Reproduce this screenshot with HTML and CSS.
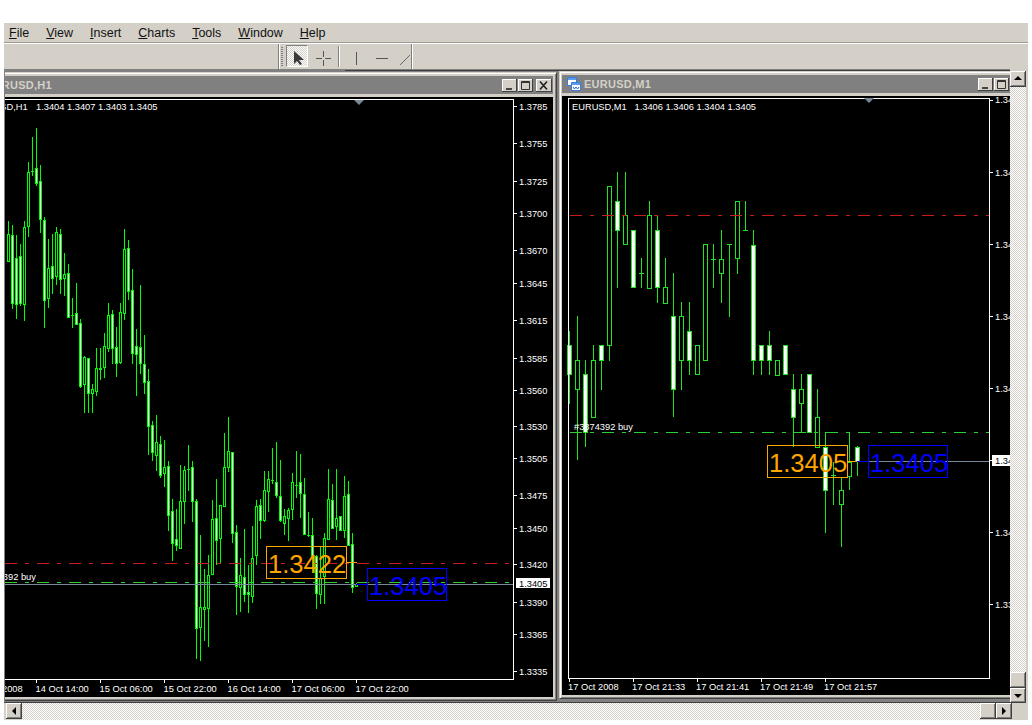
FILE: index.html
```html
<!DOCTYPE html>
<html lang="en">
<head>
<meta charset="utf-8">
<title>MetaTrader</title>
<link rel="stylesheet" href="styles.css">
</head>
<body>
<div class="app">
  <nav class="menubar">
    <span><u>F</u>ile</span><span><u>V</u>iew</span><span><u>I</u>nsert</span><span><u>C</u>harts</span><span><u>T</u>ools</span><span><u>W</u>indow</span><span><u>H</u>elp</span>
  </nav>
  <div class="toolbar">
    <div class="band">
      <div class="grip"></div>
      <div class="tool tool-active">
        <svg width="22" height="22" viewBox="0 0 22 22"><path class="ink" d="M8 6V19L11 16L14 20L16 19L13 15H18Z"/></svg>
      </div>
      <div class="tool tool-cross">
        <svg width="30" height="22" viewBox="0 0 30 22"><path class="line" d="M8 13.5H14M17 13.5H23M15.5 6V12M15.5 15V21"/></svg>
      </div>
      <div class="sep"></div>
      <div class="tool tool-v">
        <svg width="32" height="22" viewBox="0 0 32 22"><path class="line" d="M16.5 7V20"/></svg>
      </div>
      <div class="tool tool-h">
        <svg width="20" height="22" viewBox="0 0 20 22"><path class="line" d="M4 13.5H16"/></svg>
      </div>
      <div class="tool tool-d">
        <svg width="19" height="22" viewBox="0 0 19 22"><path class="line-soft" d="M8 20L18 10"/></svg>
      </div>
    </div>
  </div>
  <div class="workspace">
    <div class="mdi">
      <section class="window window-h1">
        <header class="title">
          <svg class="win-icon" width="14" height="14" viewBox="0 0 14 14"><path class="ico-a" d="M.5.5H9.5V8.5H.5Z"/><path class="ico-b" d="M4.5 5.5H13.5V13.5H4.5Z"/></svg>
          <span class="title-text">EURUSD,H1</span>
          <span class="win-btns">
            <span class="win-btn"><svg width="15" height="13" viewBox="0 0 15 13"><path class="glyph" d="M4 10H10"/></svg></span>
            <span class="win-btn"><svg width="15" height="13" viewBox="0 0 15 13"><path class="glyph-thin" d="M3.5 2.5H11.5V10.5H3.5ZM3.5 3.5H11.5"/></svg></span>
            <span class="win-btn win-close"><svg width="16" height="13" viewBox="0 0 16 13"><path class="glyph" d="M4 2.5L11 10.5M11 2.5L4 10.5"/></svg></span>
          </span>
        </header>
        <svg class="chart" width="589" height="600" viewBox="-36 97 589 600" data-chart="h1">
          <g class="candles"></g>
          <path class="frame" d="M-30.5 99.5H513.5V679.5H-30.5Z"/>
          <path class="frame" d="M514 106.5h3M514 143.5h3M514 181.5h3M514 213.5h3M514 250.5h3M514 283.5h3M514 320.5h3M514 358.5h3M514 390.5h3M514 426.5h3M514 458.5h3M514 495.5h3M514 528.5h3M514 564.5h3M514 602.5h3M514 634.5h3M514 671.5h3M36.5 680v3M100.5 680v3M164.5 680v3M228.5 680v3M292.5 680v3M356.5 680v3"/>
          <polygon class="marker" points="354,100 364,100 359,105"/>
          <path class="dash dash-red" d="M5 563.5H513"/>
          <path class="dash dash-green" d="M5 582.5H513"/>
          <path class="bid" d="M-36 584.5H513"/>
          <path class="seg-orange" d="M347 562.5H357"/>
          <path class="seg-blue" d="M356 584.5H367"/>
          <text class="axis" x="-26" y="110">EURUSD,H1<tspan x="36">1.3404 1.3407 1.3403 1.3405</tspan></text>
          <text class="axis" x="-23" y="580">#3874392 buy</text>
          <text class="axis" x="519" y="109.5">1.3785</text>
          <text class="axis" x="519" y="146.5">1.3755</text>
          <text class="axis" x="519" y="184.5">1.3725</text>
          <text class="axis" x="519" y="216.5">1.3700</text>
          <text class="axis" x="519" y="253.5">1.3670</text>
          <text class="axis" x="519" y="286.5">1.3645</text>
          <text class="axis" x="519" y="323.5">1.3615</text>
          <text class="axis" x="519" y="361.5">1.3585</text>
          <text class="axis" x="519" y="393.5">1.3560</text>
          <text class="axis" x="519" y="429.5">1.3530</text>
          <text class="axis" x="519" y="461.5">1.3505</text>
          <text class="axis" x="519" y="498.5">1.3475</text>
          <text class="axis" x="519" y="531.5">1.3450</text>
          <text class="axis" x="519" y="567.5">1.3420</text>
          <text class="axis" x="519" y="605.5">1.3390</text>
          <text class="axis" x="519" y="637.5">1.3365</text>
          <text class="axis" x="519" y="674.5">1.3335</text>
          <rect class="price-tag" x="516" y="578" width="34" height="10"/>
          <text class="axis axis-dark" x="519" y="586.5">1.3405</text>
          <text class="axis" x="-28" y="691.5">17 Oct 2008</text>
          <text class="axis" x="35.5" y="691.5">14 Oct 14:00</text>
          <text class="axis" x="99.5" y="691.5">15 Oct 06:00</text>
          <text class="axis" x="163.5" y="691.5">15 Oct 22:00</text>
          <text class="axis" x="227.5" y="691.5">16 Oct 14:00</text>
          <text class="axis" x="291.5" y="691.5">17 Oct 06:00</text>
          <text class="axis" x="355.5" y="691.5">17 Oct 22:00</text>
          <rect class="box-orange" x="266.5" y="546.5" width="80" height="32"/>
          <text class="big big-orange" x="268" y="573">1.3422</text>
          <rect class="box-blue" x="367.5" y="568.5" width="79" height="32"/>
          <text class="big big-blue" x="369" y="595">1.3405</text>
        </svg>
      </section>
      <section class="window window-m1">
        <header class="title">
          <svg class="win-icon" width="14" height="14" viewBox="0 0 14 14"><path class="ico-a" d="M.5.5H9.5V8.5H.5Z"/><path class="ico-bar" d="M1 1H9V3H1Z"/><path class="ico-b" d="M4.5 5.5H13.5V13.5H4.5Z"/><path class="ico-bar2" d="M5 6H13V8H5Z"/><path class="ico-w" d="M6 10L7.5 12L9 10L10.5 12L12 10"/></svg>
          <span class="title-text">EURUSD,M1</span>
          <span class="win-btns">
            <span class="win-btn"><svg width="15" height="13" viewBox="0 0 15 13"><path class="glyph" d="M4 10H10"/></svg></span>
            <span class="win-btn"><svg width="15" height="13" viewBox="0 0 15 13"><path class="glyph-thin" d="M3.5 2.5H11.5V10.5H3.5ZM3.5 3.5H11.5"/></svg></span>
            <span class="win-btn win-close"><svg width="16" height="13" viewBox="0 0 16 13"><path class="glyph" d="M4 2.5L11 10.5M11 2.5L4 10.5"/></svg></span>
          </span>
        </header>
        <svg class="chart" width="468" height="599" viewBox="562 96 468 599" data-chart="m1">
          <g class="candles"></g>
          <path class="frame" d="M568.5 98.5H989.5V678.5H568.5Z"/>
          <path class="frame" d="M990 100.5h3M990 172.5h3M990 244.5h3M990 316.5h3M990 388.5h3M990 460.5h3M990 532.5h3M990 604.5h3M569.5 679v3M633.5 679v3M697.5 679v3M761.5 679v3M825.5 679v3"/>
          <polygon class="marker" points="864,98 874,98 869,103"/>
          <path class="dash dash-red" d="M570 215.5H989"/>
          <path class="dash dash-green" d="M570 432.5H989"/>
          <path class="bid" d="M857 461.5H989"/>
          <path class="seg-orange" d="M848 461.5H857"/>
          <path class="seg-blue" d="M857 461.5H868"/>
          <text class="axis" x="572" y="109.5">EURUSD,M1<tspan x="634.5">1.3406 1.3406 1.3404 1.3405</tspan></text>
          <text class="axis" x="574" y="430">#3874392 buy</text>
          <text class="axis" x="995" y="103">1.34</text>
          <text class="axis" x="995" y="175.5">1.34</text>
          <text class="axis" x="995" y="247.5">1.34</text>
          <text class="axis" x="995" y="319.5">1.34</text>
          <text class="axis" x="995" y="391.5">1.34</text>
          <text class="axis" x="995" y="535.5">1.34</text>
          <text class="axis" x="995" y="607.5">1.33</text>
          <rect class="price-tag" x="992" y="455" width="38" height="11"/>
          <text class="axis axis-dark" x="995" y="464">1.34</text>
          <text class="axis" x="568" y="690">17 Oct 2008</text>
          <text class="axis" x="632" y="690">17 Oct 21:33</text>
          <text class="axis" x="696" y="690">17 Oct 21:41</text>
          <text class="axis" x="760" y="690">17 Oct 21:49</text>
          <text class="axis" x="824" y="690">17 Oct 21:57</text>
          <rect class="box-orange" x="767.5" y="445.5" width="80" height="32"/>
          <text class="big big-orange" x="769" y="472">1.3405</text>
          <rect class="box-blue" x="868.5" y="445.5" width="79" height="32"/>
          <text class="big big-blue" x="870" y="472">1.3405</text>
        </svg>
      </section>
    </div>
    <aside class="vscroll">
      <div class="sbtn"><svg width="16" height="16" viewBox="0 0 16 16"><path class="arrow" d="M8 5L12 9H4Z"/></svg></div>
      <div class="track"></div>
      <div class="sbtn"></div>
      <div class="sbtn"><svg width="16" height="15" viewBox="0 0 16 15"><path class="arrow" d="M4 6H12L8 10Z"/></svg></div>
    </aside>
  </div>
  <div class="hbar">
    <div class="sbtn"><svg width="16" height="16" viewBox="0 0 16 16"><path class="arrow" d="M10 4V12L6 8Z"/></svg></div>
    <div class="track"></div>
    <div class="sbtn"></div>
    <div class="sbtn"><svg width="16" height="16" viewBox="0 0 16 16"><path class="arrow" d="M6 4V12L10 8Z"/></svg></div>
    <div class="corner"></div>
  </div>
</div>
<script src="chart.js"></script>
</body>
</html>
```
FILE: styles.css
```css
* { box-sizing: border-box; }
html, body { margin: 0; padding: 0; height: 725px; overflow: hidden; background: #fff; }
.app {
  margin: 23px 0 0 4px;
  width: 1024px;
  height: 697px;
  display: flex;
  flex-direction: column;
  background: #d4d0c8;
  font-family: "Liberation Sans", Arial, sans-serif;
}
.menubar {
  height: 21px;
  padding: 0 0 0 5px;
  display: flex;
  gap: 17px;
  align-items: center;
  font-size: 12.5px;
  color: #111;
  border-bottom: 1px solid #fff;
  box-shadow: inset 0 -1px #9c9a94;
}
.toolbar { height: 25px; padding-left: 274px; }
.band {
  width: 134px;
  height: 25px;
  display: flex;
  align-items: flex-start;
  border-left: 1px solid #808080;
  border-right: 1px solid #808080;
  box-shadow: 1px 0 #fff, inset 1px 0 #fff;
  overflow: hidden;
}
.grip {
  width: 3px;
  height: 20px;
  margin: 3px 3px 0 2px;
  background: repeating-linear-gradient(#808080 0 1px, #d4d0c8 1px 2px);
}
.tool { height: 22px; margin-top: 1px; }
.tool svg { display: block; }
.tool-active {
  width: 22px;
  border: 1px solid;
  border-color: #808080 #fff #fff #808080;
  background: repeating-conic-gradient(#d4d0c8 0 25%, #fff 0 50%) 0 0 / 2px 2px;
}
.tool-active svg { margin: -1px; }
.tool-cross { width: 30px; }
.sep { width: 2px; height: 21px; margin-top: 2px; border-left: 1px solid #808080; border-right: 1px solid #fff; }
.tool-v { width: 32px; }
.tool-h { width: 20px; }
.tool-d { width: 19px; }
.ink { fill: #3a3a3a; }
.line { fill: none; stroke: #555; stroke-width: 1; }
.line-soft { fill: none; stroke: #666; stroke-width: 1; }
.workspace { height: 634px; display: flex; }
.mdi {
  position: relative;
  width: 1006px;
  height: 634px;
  overflow: hidden;
  background: #808080;
  border-top: 1px solid #808080;
  border-left: 1px solid #808080;
  border-bottom: 1px solid #404040;
}
.mdi::before {
  content: "";
  position: absolute;
  left: 340px;
  right: 0;
  top: 0;
  height: 1px;
  background: #404040;
  z-index: 3;
}
.window {
  position: absolute;
  display: flex;
  flex-direction: column;
  background: #d4d0c8;
  border: 1px solid;
  border-color: #d4d0c8 #404040 #404040 #d4d0c8;
  box-shadow: inset 1px 1px #fff, inset -1px -1px #808080;
  padding: 3px;
}
.window-h1 { left: -45px; top: 2px; width: 597px; height: 629px; }
.window-m1 { left: 554px; top: 1px; width: 474px; height: 628px; padding-left: 2px; }
.title {
  height: 18px;
  margin-bottom: 3px;
  padding: 0 1px 0 5px;
  display: flex;
  align-items: center;
  background: #808080;
  color: #d4d0c8;
}
.title-text { margin-left: 3px; font-size: 11px; font-weight: 700; letter-spacing: .25px; flex: 1; }
.win-icon { display: block; flex: none; }
.ico-a, .ico-b { fill: #fff; stroke: #3a7be0; }
.ico-bar, .ico-bar2 { fill: #5a9cf0; }
.ico-w { fill: none; stroke: #2a5cc0; }
.win-btns { display: flex; gap: 1px; }
.win-btn {
  display: block;
  width: 15px;
  height: 13px;
  background: #d4d0c8;
  box-shadow: inset -1px -1px #404040, inset 1px 1px #fff;
}
.win-btn svg { display: block; }
.win-close { width: 16px; margin-left: 2px; }
.glyph { fill: none; stroke: #222; stroke-width: 1.6; }
.glyph-thin { fill: none; stroke: #333; stroke-width: 1; }
.chart { display: block; background: #000; flex: none; }
.frame { fill: none; stroke: #fff; stroke-width: 1; shape-rendering: crispEdges; }
.marker { fill: #778899; }
.wick { fill: none; stroke-width: 1; shape-rendering: crispEdges; }
.body { stroke-width: 1; shape-rendering: crispEdges; }
.h1-c { stroke: #00ff00; }
.m1-c { stroke: #1fe61f; }
.up { fill: #000; }
.down { fill: #fff; }
.dash { fill: none; stroke-width: 1; stroke-dasharray: 12 8 4 8; shape-rendering: crispEdges; }
.dash-red { stroke: #c81e1e; }
.dash-green { stroke: #32cd32; }
.bid { fill: none; stroke: #778899; stroke-width: 1; shape-rendering: crispEdges; }
.seg-orange { fill: none; stroke: #ffa500; shape-rendering: crispEdges; }
.seg-blue { fill: none; stroke: #0000ff; shape-rendering: crispEdges; }
.axis { fill: #fff; font-family: "Liberation Sans", Arial, sans-serif; font-size: 9.3px; }
.axis-dark { fill: #000; }
.price-tag { fill: #fff; }
.big { font-family: "Liberation Sans", Arial, sans-serif; font-size: 25.6px; }
.big-orange { fill: #ffa500; }
.big-blue { fill: #0000ff; }
.box-orange { fill: none; stroke: #ffa500; shape-rendering: crispEdges; }
.box-blue { fill: none; stroke: #0000ff; shape-rendering: crispEdges; }
.vscroll { width: 17px; padding-top: 2px; padding-right: 1px; display: flex; flex-direction: column; }
.vscroll .sbtn { flex: 0 0 16px; }
.vscroll .sbtn:last-child { flex-basis: 15px; }
.track {
  flex: 1;
  background: repeating-conic-gradient(#d4d0c8 0 25%, #fff 0 50%) 0 0 / 2px 2px;
}
.sbtn {
  width: 16px;
  height: 16px;
  background: #d4d0c8;
  box-shadow: inset -1px -1px #404040, inset 1px 1px #fff, inset -2px -2px #808080;
}
.sbtn svg { display: block; }
.arrow { fill: #000; }
.hbar { height: 17px; padding-left: 2px; display: flex; }
.hbar .sbtn { flex: none; height: 16px; }
.corner { width: 16px; }
```
FILE: chart.js
```js
// One row per candle: [high, low, bodyTop, bodyBottom, filledWhite]. Values are read off crops
// at 3x, each block carrying the page-y origin of its crop.
var H1 = [
  [110, [
    [333,455,373,452,0],[345,597,376,578,1],[375,627,445,581,1],[402,588,439,578,1],[333,633,352,581,0],
    [156,381,187,349,0],[81,198,184,184,0],[54,228,175,218,1],[166,369,214,328,1],[322,654,331,571,1],
    [387,594,475,565,0],[372,552,469,505,1],[351,525,367,499,0],[357,552,373,508,1],[429,558,493,505,0],
    [462,624,490,622,1],[564,654,616,616,0],[519,645,610,643,1],[627,834,640,829,1],[738,908,742,823,0],
    [745,908,745,850,1],[822,908,838,848,0],[714,858,775,844,0],[714,810,775,778,1],[669,804,709,772,0],
    [579,726,616,715,0],[600,762,613,715,1],[651,801,712,760,1],[579,762,607,757,0],[357,630,418,610,0],
    [390,570,415,544,1],[477,762,541,730,1],[657,858,709,733,1],[525,792,712,760,1],[675,852,763,817,1]
  ]],
  [380, [
    [-33,225,3,139,1],[124,243,136,215,1],[105,273,187,224,0],[168,294,193,284,1],[180,321,262,278,0],
    [243,453,259,404,1],[358,543,394,488,1],[387,513,478,494,1],[255,507,364,504,0],[258,432,271,362,0],
    [195,333,268,268,0],[243,426,262,362,1],[357,837,364,743,1]
  ]],
  [410, [
    [375,752,592,650,0],[478,692,592,598,0],[435,710,496,595,0],[270,495,328,493,0],[208,465,325,391,1],
    [286,463,286,385,0],[69,290,172,289,0],[21,185,124,170,0],[127,400,127,370,1],[345,615,365,529,1],
    [445,605,496,532,0],[357,575,502,553,1],[465,609,547,553,1],[348,578,445,559,0],[270,464,289,436,0],
    [268,388,286,331,1],[182,335,241,329,0],[183,305,208,244,0],[115,222,211,211,0],[97,265,217,256,1],
    [150,335,259,331,1],[298,375,319,340,0],[295,392,301,325,0],[190,330,217,298,0],[123,263,224,224,0],
    [133,325,217,250,1],[205,375,253,373,1],[307,380,374,374,0],[325,490,376,440,1],[435,596,437,550,1],
    [410,582,505,553,0],[370,582,385,497,0],[178,388,267,388,0],[222,355,271,355,1],[178,390,325,349,0],
    [320,360,319,361,1],[198,385,259,361,0],[213,408,253,406,1],[370,550,403,532,1],[518,532,523,528,0]
  ]]
];
var M1 = [
  [160, [
    [513,732,556,643,1],[468,900,601,688,0],[601,860,643,817,1],[556,772,601,772,0],[556,690,556,601,1],
    [79,602,79,556,0],[36,383,124,211,1],[36,253,166,253,0],[211,383,211,382,1],[294,383,340,340,0],
    [124,383,166,383,0],[166,428,211,382,1],[294,428,382,428,0],[340,772,469,688,1],[426,690,469,601,0],
    [426,645,514,601,1],[556,644,556,643,0],[253,601,253,601,0],[253,383,296,296,0],[211,428,296,340,0],
    [253,470,253,253,0],[124,341,124,295,0],[123,211,211,211,0],[211,644,254,601,1],[556,644,556,601,1],
    [514,644,556,601,1],[601,644,601,644,0],[556,644,556,643,1],[643,860,688,772,1],[643,817,688,730,0],
    [643,817,643,817,1],[688,860,772,860,0],[817,1120,860,990,1],[906,1035,945,945,0],[952,1162,990,1033,0],
    [817,990,905,947,0],[858,947,860,903,1]
  ]]
];
var NS = "http://www.w3.org/2000/svg";
function el(parent, name, attrs) {
  var n = document.createElementNS(NS, name);
  for (var k in attrs) n.setAttribute(k, attrs[k]);
  parent.appendChild(n);
  return n;
}
function draw(key, groups, x0, step, half, cls) {
  var g = document.querySelector('[data-chart="' + key + '"] .candles');
  var i = 0;
  groups.forEach(function (block) {
    var off = block[0];
    block[1].forEach(function (c) {
      var y = function (v) { return Math.round(off + v / 3); };
      var x = x0 + step * i;
      el(g, "path", { "class": "wick " + cls, d: "M" + (x + .5) + " " + y(c[0]) + "V" + y(c[1]) });
      if (y(c[2]) === y(c[3])) {
        el(g, "path", { "class": "wick " + cls, d: "M" + (x - half) + " " + (y(c[2]) + .5) + "H" + (x + half + 1) });
      } else {
        el(g, "rect", {
          "class": "body " + cls + (c[4] ? " down" : " up"),
          x: x - half + .5, y: y(c[2]) + .5, width: half * 2, height: y(c[3]) - y(c[2])
        });
      }
      i++;
    });
  });
}
draw("h1", H1, 8, 4, 1, "h1-c");
draw("m1", M1, 569, 8, 2, "m1-c");
```
